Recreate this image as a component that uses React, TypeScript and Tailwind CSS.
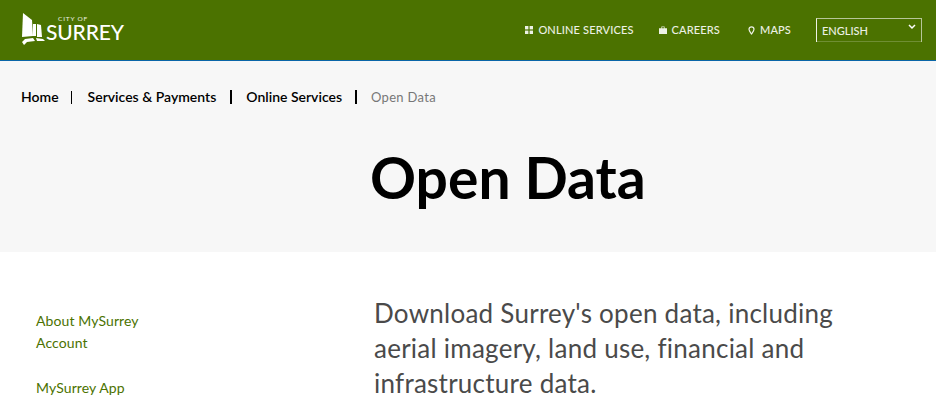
import React from 'react';

const NavLink: React.FC<{ icon: React.ReactNode; label: string }> = ({ icon, label }) => (
    <a className="flex items-center gap-[5px] text-[11px] font-medium tracking-[0.15px] text-white/90 whitespace-nowrap">
        <span className="flex w-[8px] justify-center">{icon}</span>
        {label}
    </a>
);

const App: React.FC = () => {
    return (
        <div className="w-[936px] h-[400px] overflow-hidden bg-white font-['Lato',sans-serif]">
            {/* Header */}
            <header className="h-[61px] bg-[#4b7200] border-b border-[#0a66a8] flex items-center pl-[21px] pr-[14px]">
                <div className="flex items-end relative h-[34px] -mt-[2px]">
                    <svg width="26" height="33" viewBox="0 0 26 33" className="text-white">
                        <path fill="currentColor" d="M2 0 L11 7 L12 23 L1 24 Z" />
                        <path fill="currentColor" d="M12 11 L15 11 L15 23 L12 23 Z" />
                        <path fill="currentColor" d="M16 11 L20 12 L21 24 L16 24 Z" />
                        <path fill="currentColor" d="M1 29 L4 26 L12 25 L14 28 L6 29 L3 32 Z" />
                        <path fill="currentColor" d="M15 25 L22 26 L24 28 L16 28 Z" />
                    </svg>
                    <div className="flex flex-col items-start -ml-[1px] leading-none mb-[4px]">
                        <span className="text-[6.5px] leading-[6px] tracking-[0.8px] text-white/90 ml-[12px]">CITY OF</span>
                        <span className="text-[21px] leading-[20px] text-white font-medium tracking-[-0.15px]">SURREY</span>
                    </div>
                </div>
                <nav className="ml-auto flex items-center">
                    <NavLink
                        label="ONLINE SERVICES"
                        icon={
                            <svg width="8" height="8" viewBox="0 0 8 8" fill="currentColor">
                                <rect x="0" y="0" width="3.4" height="3.4" />
                                <rect x="4.6" y="0" width="3.4" height="3.4" />
                                <rect x="0" y="4.6" width="3.4" height="3.4" />
                                <rect x="4.6" y="4.6" width="3.4" height="3.4" />
                            </svg>
                        }
                    />
                    <div className="w-[25px]"></div>
                    <NavLink
                        label="CAREERS"
                        icon={
                            <svg width="8" height="8" viewBox="0 0 8 8" fill="currentColor">
                                <path d="M0 2.2 H2.4 V0.6 H5.6 V2.2 H8 V8 H0 Z M3 2.2 H5 V1.2 H3 Z" fillRule="evenodd" />
                            </svg>
                        }
                    />
                    <div className="w-[27px]"></div>
                    <NavLink
                        label="MAPS"
                        icon={
                            <svg width="7" height="9" viewBox="0 0 7 9" fill="none" stroke="currentColor" strokeWidth="1.2">
                                <path d="M3.5 8 C2 6 1 4.8 1 3.3 A2.5 2.5 0 0 1 6 3.3 C6 4.8 5 6 3.5 8 Z" />
                            </svg>
                        }
                    />
                    <div className="ml-[25px] -mt-[1px] relative w-[106px] h-[24px] border-l border-t border-r border-white/60 border-l-white/90">
                        <span className="absolute left-[5px] top-[4px] text-[11px] font-medium text-white/90">ENGLISH</span>
                        <svg width="8" height="6" viewBox="0 0 8 6" className="absolute right-[5px] top-[5px]" fill="none" stroke="white" strokeWidth="1.5">
                            <path d="M1 1 L4 4 L7 1" />
                        </svg>
                        <div className="absolute left-0 right-0 bottom-0 h-px bg-white/20"></div>
                    </div>
                </nav>
            </header>

            {/* Title band */}
            <section className="h-[191px] bg-[#f7f7f7] pl-[21px]">
                <div className="flex items-center pt-[26px] h-[46px] text-[14px] leading-[20px] font-semibold text-black whitespace-nowrap">
                    <a>Home</a>
                    <span className="w-px h-[13px] bg-black ml-[12px] mr-[16px]"></span>
                    <a>Services &amp; Payments</a>
                    <span className="w-[2px] h-[14px] bg-black mx-[14px]"></span>
                    <a>Online Services</a>
                    <span className="w-[2px] h-[14px] bg-black ml-[13px] mr-[14px]"></span>
                    <span className="text-[13px] font-normal text-[#777777] tracking-[0.3px]">Open Data</span>
                </div>
                <h1 className="mt-[35px] pl-[349px] text-[57px] leading-[70px] font-bold text-black whitespace-nowrap">Open Data</h1>
            </section>

            {/* Body */}
            <main className="flex pt-[44px]">
                <aside className="w-[374px] pl-[36px] shrink-0 text-[14px] leading-[22px] tracking-[0.1px] text-[#4b7200]">
                    <a className="block w-[130px] mt-[14px]">About MySurrey Account</a>
                    <a className="block mt-[23px]">MySurrey App</a>
                </aside>
                <p className="w-[500px] text-[26px] leading-[35px] text-[#4a4a4a] tracking-[0.25px]">
                    Download Surrey's open data, including aerial imagery, land use, financial and infrastructure data.
                </p>
            </main>
        </div>
    );
};

export default App;
